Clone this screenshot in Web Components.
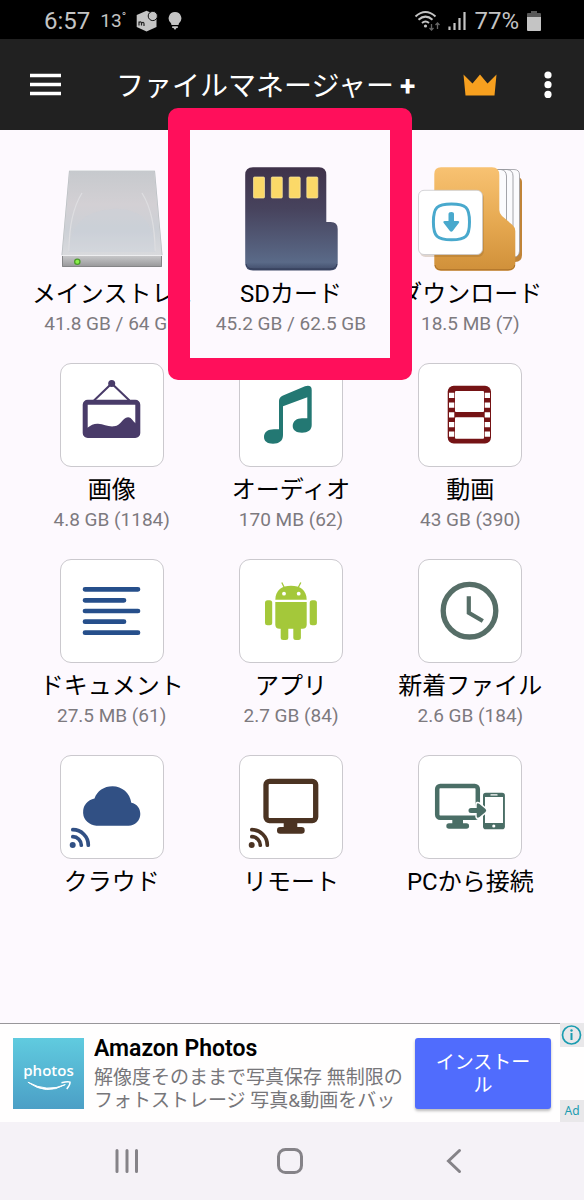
<!DOCTYPE html>
<html lang="ja">
<head>
<meta charset="utf-8">
<meta name="viewport" content="width=device-width, initial-scale=1">
<title>ファイルマネージャー +</title>
<style>
  body { margin: 0; background: #fdf9fe; font-family: Roboto, "Noto Sans CJK JP", sans-serif; color: #000; }
</style>
</head>
<body>
<file-manager-app></file-manager-app>

<template id="t-app">
  <style>
    :host { display: flex; flex-direction: column; min-height: 100vh; }
    main { flex: 1; padding: 37px 24px 24px 22px; display: grid; grid-template-columns: repeat(3, minmax(0, 1fr)); gap: 24px 0; align-content: start; }
    .spot { position: relative; }
    .mark { position: absolute; top: -59px; left: -33px; right: -31px; height: 272px; box-sizing: border-box; border: 22px solid #ff0f5b; border-radius: 10px; pointer-events: none; z-index: 2; }
    svg { display: block; width: 104px; height: 104px; }
  </style>
  <status-bar></status-bar>
  <app-header>ファイルマネージャー</app-header>
  <main>
    <file-tile plain>
      <svg slot="icon" viewBox="0 0 104 104" aria-hidden="true">
        <defs>
          <linearGradient id="dt" x1="0" y1="0" x2="0" y2="1"><stop offset="0" stop-color="#c6c9cd"/><stop offset=".4" stop-color="#d3d0d4"/><stop offset=".7" stop-color="#ccd0d6"/><stop offset="1" stop-color="#d9dadd"/></linearGradient>
          <linearGradient id="df" x1="0" y1="0" x2="0" y2="1"><stop offset="0" stop-color="#c9c9cb"/><stop offset="1" stop-color="#98989a"/></linearGradient>
        </defs>
        <path d="M9.500 3.500H94.500L102 88.500H2Z" fill="url(#dt)" stroke="#e4e6e8"/>
        <path d="M94.500 4 102 88M9.500 4 2 88" stroke="#c0c3c7" fill="none"/>
        <path d="M9 84C9 62 12 42 22 26M95 84C95 62 92 42 82 26" fill="none" stroke="#dedee1" stroke-width="1.200"/>
        <path d="M9 85Q10 45 52 42T95 85Z" fill="#c6cedb" opacity=".25"/>
        <path d="M2 88.500H102V99.700H2Z" fill="url(#df)"/>
        <path d="M2 88.500H102" stroke="#eeeef0"/>
        <path d="M2.500 89V99.500H101.500V89" fill="none" stroke="#858587"/>
        <circle cx="17.300" cy="94.700" r="3.300" fill="#4c9b2c"/><circle cx="17.300" cy="94.700" r="2" fill="#8af04a"/>
      </svg>
      メインストレ…<span slot="size">41.8 GB / 64 GB</span>
    </file-tile>
    <div class="spot">
      <file-tile plain>
        <svg slot="icon" viewBox="0 0 104 104" aria-hidden="true">
          <defs><linearGradient id="sd" x1="0" y1="0" x2="0" y2="1"><stop offset="0" stop-color="#3f324a"/><stop offset=".4" stop-color="#47435d"/><stop offset=".92" stop-color="#5a6a88"/><stop offset="1" stop-color="#3f4a68"/></linearGradient></defs>
          <path d="M14 .3H80Q87.300 .3 87.300 8V55H91.700Q98.700 55 98.700 62V96Q98.700 103.500 91 103.500H14Q6.200 103.500 6.200 96V8Q6.200 .3 14 .3Z" fill="url(#sd)"/>
          <path d="M7 97Q8 102 14 102H91Q97 102 98 97" stroke="#2d3550" fill="none" stroke-width=".8"/>
          <g fill="#fbd968" stroke="#fbe8a0" stroke-width=".7"><rect x="14.500" y="10" width="11" height="21" rx="1"/><rect x="32.300" y="10" width="11" height="21" rx="1"/><rect x="50.200" y="10" width="11" height="21" rx="1"/><rect x="67.800" y="10" width="11" height="21" rx="1"/></g>
        </svg>
        SDカード<span slot="size">45.2 GB / 62.5 GB</span>
      </file-tile>
      <div class="mark"></div>
    </div>
    <file-tile plain>
      <svg slot="icon" viewBox="0 0 104 104" aria-hidden="true">
        <defs><linearGradient id="fo" x1="0" y1="0" x2="0" y2="1"><stop offset="0" stop-color="#f8c272"/><stop offset=".55" stop-color="#e5a850"/><stop offset="1" stop-color="#d0903a"/></linearGradient></defs>
        <path d="M88 10H100Q104 11 104 15V88Q104 95 97 95H86Z" fill="#c08438"/>
        <path d="M70 2.500H96Q101.500 2.500 101.500 8V84Q101 90 96 90H70Z" fill="#fbfbfd" stroke="#999a9f" stroke-width=".8"/>
        <path d="M78 2.500H89Q95 3 95 9V72M78 2.500H83Q88 3 88.500 9V56" fill="none" stroke="#999a9f" stroke-width=".9"/>
        <path d="M23 .2H74Q81.300 .2 81.300 8V43Q81.300 46.500 84 49L94.500 58Q97.300 60.500 97.300 64V97Q97.300 103.700 90 103.700H23Q16.300 103.700 16.300 97V7Q16.300 .2 23 .2Z" fill="url(#fo)"/>
        <path d="M17 98Q18 102.800 23 102.800H90Q96 102.800 96.800 98" fill="none" stroke="#aa7028" stroke-width="1"/>
        <rect x="1.500" y="25" width="64.500" height="65" rx="6" fill="#7c5525" opacity=".22"/>
        <rect x=".5" y="23.300" width="64" height="64.200" rx="5.500" fill="#fff" stroke="#c9c9cd" stroke-width=".8"/>
        <path d="M33.500 37C48 37 51.500 40.500 51.500 54.900S48 72.800 33.500 72.800 15.400 69.300 15.400 54.900 19 37 33.500 37Z" fill="none" stroke="#49a9cd" stroke-width="3"/>
        <path d="M30.500 47Q30.500 45 33.300 45T36 47V54H39.800Q42 54 40.800 56L34.700 64Q33.300 65.500 31.900 64L25.700 56Q24.600 54 26.800 54H30.500Z" fill="#49a9cd"/>
      </svg>
      ダウンロード<span slot="size">18.5 MB (7)</span>
    </file-tile>

    <file-tile>
      <svg slot="icon" viewBox="0 0 104 104" aria-hidden="true">
        <g fill="none" stroke="#493b69"><path d="M34 37.500 51.700 20.500 69.500 37.500" stroke-width="2"/><rect x="25.200" y="39.200" width="52.600" height="33.300" rx="2.500" stroke-width="5"/></g>
        <circle cx="51.700" cy="20.500" r="3.500" fill="#493b69"/>
        <path d="M27 65C31 62 34 60.500 38 60.700 44 61 48 64 54 63.300 62 62.500 62 54.500 68 54.300 72 54.300 73 59.500 77 61V74H27Z" fill="#493b69"/>
      </svg>
      画像<span slot="size">4.8 GB (1184)</span>
    </file-tile>
    <file-tile>
      <svg slot="icon" viewBox="0 0 104 104" aria-hidden="true"><path d="M44 43.300V72C44 78 40 80.700 34 80.700 28 80.700 25 78 25 74 25 69 29 66.300 35 66.300H40V38Q40 34 44 32.500L66 23.300Q72.700 21.500 72.700 27V62C72.700 67 69 69.700 63 69.700 57 69.700 53.700 67 53.700 63 53.700 58 58 55.300 63 55.300H68.300V34.300Z" fill="#237873"/></svg>
      オーディオ<span slot="size">170 MB (62)</span>
    </file-tile>
    <file-tile>
      <svg slot="icon" viewBox="0 0 104 104" aria-hidden="true">
        <rect x="29.700" y="22.700" width="43.300" height="57.700" rx="6" fill="#751315"/>
        <g fill="#fff"><rect x="37" y="28" width="29" height="21" rx="1"/><rect x="37" y="54.300" width="29" height="21.400" rx="1"/>
        <path d="M31 29.700h5.300v5.300h-5.300zM31 39.400h5.300v5.300h-5.300zM31 49.200h5.300v5.300h-5.300zM31 59h5.300v5.300h-5.300zM31 68.500h5.300v5.300h-5.300zM66.700 29.700h5.300v5.300h-5.300zM66.700 39.400h5.300v5.300h-5.300zM66.700 49.200h5.300v5.300h-5.300zM66.700 59h5.300v5.300h-5.300zM66.700 68.500h5.300v5.300h-5.300z"/></g>
      </svg>
      動画<span slot="size">43 GB (390)</span>
    </file-tile>

    <file-tile>
      <svg slot="icon" viewBox="0 0 104 104" aria-hidden="true"><path d="M25 30.300H78M25 41.300H64M25 52H78M25 62.700H64M25 73.700H78" stroke="#264f8b" stroke-width="4.700" stroke-linecap="round"/></svg>
      ドキュメント<span slot="size">27.5 MB (61)</span>
    </file-tile>
    <file-tile>
      <svg slot="icon" viewBox="0 0 104 104" aria-hidden="true">
        <g fill="#a4c83a"><path d="M36.300 40.700C36.500 31 43 26.700 52 26.700S67.500 31 67.700 40.700Z"/><path d="M36.300 43H67.700V65.500Q67.700 69.700 63.500 69.700H40.500Q36.300 69.700 36.300 65.500Z"/><rect x="26" y="41.300" width="7.200" height="25" rx="2.500"/><rect x="70.700" y="41.300" width="7.200" height="25" rx="2.500"/><rect x="41.700" y="64" width="7.600" height="17" rx="2.500"/><rect x="54.300" y="64" width="7.600" height="17" rx="2.500"/></g>
        <path d="M42.800 23.500 45.500 29M61.800 23.500 59 29" stroke="#a4c83a" stroke-width="1.300"/><circle cx="45" cy="34.700" r="1.900" fill="#fff"/><circle cx="59.700" cy="34.700" r="1.900" fill="#fff"/>
      </svg>
      アプリ<span slot="size">2.7 GB (84)</span>
    </file-tile>
    <file-tile>
      <svg slot="icon" viewBox="0 0 104 104" aria-hidden="true"><g fill="none" stroke="#566e67"><circle cx="51.500" cy="51.700" r="26.300" stroke-width="5.300"/><path d="M50.800 37.300V53.700L64.800 62" stroke-width="4.200"/></g></svg>
      新着ファイル<span slot="size">2.6 GB (184)</span>
    </file-tile>

    <file-tile>
      <svg slot="icon" viewBox="0 0 104 104" aria-hidden="true">
        <path d="M36.300 70.700A13.700 13.700 0 0 1 34.500 43.500C37 36 44 31.300 52.500 31.300 62 31.300 70 38 71.300 47.800 77 49 80.300 53.500 80.300 59A11.700 11.700 0 0 1 68.600 70.700Z" fill="#315084"/>
        <circle cx="12.700" cy="90" r="3" fill="#315084"/><path d="M12.800 81.700A8.500 8.500 0 0 1 21.300 90.200M12.800 74.700A15.500 15.500 0 0 1 28.300 90.200" fill="none" stroke="#315084" stroke-width="3.700" stroke-linecap="round"/>
      </svg>
      クラウド
    </file-tile>
    <file-tile>
      <svg slot="icon" viewBox="0 0 104 104" aria-hidden="true">
        <rect x="27" y="26.300" width="49.700" height="39.300" rx="3.500" fill="none" stroke="#4b3322" stroke-width="5.300"/><path d="M44.700 67H58.300V74H44.700Z" fill="#4b3322"/><rect x="38" y="72" width="27.700" height="6.700" rx="3.200" fill="#4b3322"/>
        <circle cx="12.700" cy="90" r="3" fill="#4b3322"/><path d="M12.800 81.700A8.500 8.500 0 0 1 21.300 90.200M12.800 74.700A15.500 15.500 0 0 1 28.300 90.200" fill="none" stroke="#4b3322" stroke-width="3.700" stroke-linecap="round"/>
      </svg>
      リモート
    </file-tile>
    <file-tile>
      <svg slot="icon" viewBox="0 0 104 104" aria-hidden="true">
        <rect x="19.200" y="30.900" width="40.600" height="31.900" rx="3" fill="none" stroke="#4a6e66" stroke-width="4.500"/><path d="M34.300 64H45V69.500H34.300Z" fill="#4a6e66"/><rect x="28.300" y="68.300" width="22.800" height="5.500" rx="2.700" fill="#4a6e66"/>
        <rect x="64" y="36.700" width="24" height="38.500" rx="3" fill="#fff"/><rect x="65" y="37.700" width="21.900" height="36.500" rx="2.800" fill="#4a6e66"/><rect x="67" y="42" width="18" height="26" fill="#fff"/><path d="M73 39.900H79" stroke="#fff" stroke-width="1.300" stroke-linecap="round"/><circle cx="75.800" cy="71" r="1.600" fill="#fff"/>
        <path d="M53 53H58.700V50Q58.700 47 61.500 49L67.500 54Q69 55.500 67.500 57L61.500 62Q58.700 64 58.700 61V58H53Q50.500 58 50.500 55.500T53 53Z" fill="#4a6e66" stroke="#fff" stroke-width="3" paint-order="stroke"/>
      </svg>
      PCから接続
    </file-tile>
  </main>
  <ad-banner>
    Amazon Photos
    <span slot="text">解像度そのままで写真保存 無制限の<br>フォトストレージ 写真&amp;動画をバッ</span>
    <span slot="action">インストール</span>
  </ad-banner>
  <nav-bar></nav-bar>
</template>

<template id="t-status">
  <style>
    :host { display: flex; align-items: center; gap: 10px; height: 39px; box-sizing: border-box; padding: 2px 43px 0 44px; background: #000; color: #c4c4c4; font-size: 24px; line-height: 36px; }
    .temp { font-size: 19px; }
    .temp sup { font-size: 12px; line-height: 0; vertical-align: 6px; }
    svg { display: block; flex: none; }
    .sp { flex: 1; }
    .set { display: flex; align-items: center; gap: 8px; }
  </style>
  <span>6:57</span><span class="temp">13<sup>°</sup></span>
  <svg width="22" height="22" viewBox="0 0 22 22" aria-hidden="true"><path d="M10.500 .8 20.500 5V17L10.500 21.500.700 17V5Z" fill="#c4c4c4"/><circle cx="16.800" cy="6" r="4.600" fill="#c4c4c4" stroke="#111" stroke-width="1"/><path d="M3 15.500V11.500M3 12.500Q5.500 11 5.500 13.500V15.500M5.500 13Q8 11.500 8 14V16" fill="none" stroke="#222" stroke-width="1.200"/></svg>
  <svg width="14" height="20" viewBox="4 1 14 20" aria-hidden="true"><path d="M11 2A6.300 6.300 0 0 0 7 13.200L7.500 15H14.500L15 13.200A6.300 6.300 0 0 0 11 2ZM8.200 16.300H13.800V18H12.500L11 20 9.500 18H8.200Z" fill="#c4c4c4"/></svg>
  <span class="sp"></span>
  <div class="set">
    <svg width="26" height="22" viewBox="0 0 26 22" aria-hidden="true"><g fill="none" stroke="#c4c4c4" stroke-width="2"><path d="M1.500 6.500Q11.500-2.500 21.500 6.500M4.500 9.700Q11.500 3.500 18.500 9.700M8 13Q11.500 10 15 13"/></g><circle cx="11.500" cy="16" r="1.600" fill="#c4c4c4"/><path d="M17.500 14V20M15.500 18 17.500 20 19.500 18M23.500 19V13M21.500 15 23.500 13 25.500 15" stroke="#666" fill="none" stroke-width="1.300"/></svg>
    <svg width="18" height="20" viewBox="0 0 18 20" aria-hidden="true"><path d="M1.500 15.500V19M6.500 12V19M11.500 7V19M16.500 1V19" stroke="#c4c4c4" stroke-width="2.200"/></svg>
    <span>77%</span>
    <svg width="14" height="20" viewBox="0 0 14 20" aria-hidden="true"><path d="M4 0H10V2H13Q14 2 14 3V6H0V3Q0 2 1 2H4Z" fill="#585858"/><path d="M0 6H14V19Q14 20 13 20H1Q0 20 0 19Z" fill="#c4c4c4"/></svg>
  </div>
</template>

<template id="t-header">
  <style>
    :host { display: flex; align-items: center; height: 91px; box-sizing: border-box; padding: 0 12px 0 22px; background: #212121; color: #fff; }
    button { flex: none; width: 48px; height: 48px; padding: 0; border: 0; background: none; color: inherit; display: grid; place-items: center; }
    h1 { flex: 1; min-width: 0; margin: 4px 0 0 46px; display: flex; align-items: center; gap: 6px; font-size: 28px; line-height: 40px; font-weight: 400; white-space: nowrap; }
    b { font-size: 28px; line-height: 36px; font-weight: 700; }
    .acts { display: flex; gap: 20px; }
  </style>
  <button aria-label="メニュー"><svg width="32" height="24" viewBox="0 0 32 24"><path d="M0 2.500H31M0 11.500H31M0 20.500H31" stroke="#fff" stroke-width="3.300"/></svg></button>
  <h1><slot></slot><b>+</b></h1>
  <div class="acts">
    <button aria-label="プレミアム"><svg width="34" height="24" viewBox="0 0 34 24"><path d="M.5 1.500 9.500 10.500 17 1.500 24.500 10.500 33.500 1.500 31.500 22.500H2.500Z" fill="#f7a01f"/></svg></button>
    <button aria-label="その他"><svg width="8" height="28" viewBox="0 0 8 28"><g fill="#fff"><circle cx="4" cy="4" r="3.600"/><circle cx="4" cy="13.700" r="3.600"/><circle cx="4" cy="23.400" r="3.600"/></g></svg></button>
  </div>
</template>

<template id="t-tile">
  <style>
    :host { display: block; }
    button { display: flex; flex-direction: column; align-items: center; width: 100%; padding: 0; border: 0; background: none; font: inherit; color: inherit; }
    .tile { box-sizing: border-box; width: 104px; height: 104px; border: 1px solid #cbc9ce; border-radius: 11px; background: #fff; display: grid; place-content: center; }
    :host([plain]) .tile { border-color: transparent; background: none; }
    .name { margin-top: 8px; font-size: 24px; line-height: 30px; white-space: nowrap; }
    .size { font-size: 19px; line-height: 30px; color: #7d7a7f; white-space: nowrap; }
  </style>
  <button><span class="tile"><slot name="icon"></slot></span><span class="name"><slot></slot></span><span class="size"><slot name="size"></slot></span></button>
</template>

<template id="t-ad">
  <style>
    :host { display: flex; height: 99px; background: #fffefe; }
    .body { flex: 1; min-width: 0; display: flex; align-items: flex-start; box-sizing: border-box; border-top: 1px solid #98969a; padding: 14px 9px 0 13px; }
    .logo { flex: none; width: 71px; height: 71px; background: linear-gradient(#60cbdf, #4b9fc6); display: flex; flex-direction: column; align-items: center; color: #fff; font: 600 15px/21px "Open Sans", sans-serif; padding-top: 22px; box-sizing: border-box; }
    .copy { flex: 1; min-width: 0; margin-left: 10px; overflow: hidden; white-space: nowrap; }
    h2 { margin: 0 0 6px; font-size: 23px; line-height: 22px; font-weight: 600; color: #000; }
    p { margin: 0; font-size: 19px; line-height: 23px; color: #77767a; }
    .cta { flex: none; width: 136px; height: 71px; padding: 0 20px; border: 0; border-radius: 3px; background: #506cfd; box-shadow: 0 2px 3px #0004; color: #fff; font: inherit; font-size: 19px; line-height: 23px; }
    .side { flex: none; width: 24px; display: flex; flex-direction: column; justify-content: space-between; font: 12px/22px "Noto Sans", sans-serif; text-align: center; }
    .side a { display: block; background: #e9e8ea; color: #1a9cb0; text-decoration: none; }
    svg { display: block; }
  </style>
  <div class="body">
    <div class="logo">photos<svg width="46" height="12" viewBox="0 0 48 12" aria-hidden="true"><path d="M2 1Q22 12 41 3.500 21 15 2 1Z" fill="#fff" stroke="#fff"/><path d="M37 1.500Q44 0 46 1 46 4 42.500 8" fill="none" stroke="#fff" stroke-width="1.500"/></svg></div>
    <div class="copy"><h2><slot></slot></h2><p><slot name="text"></slot></p></div>
    <button class="cta"><slot name="action"></slot></button>
  </div>
  <div class="side">
    <a href="#info" aria-label="広告について"><svg width="24" height="24" viewBox="0 0 24 24"><circle cx="11.500" cy="12" r="9" fill="none" stroke="#1a9cb0" stroke-width="1.700"/><path d="M11.500 10V17" stroke="#1a9cb0" stroke-width="2"/><circle cx="11.500" cy="7.500" r="1.200" fill="#1a9cb0"/></svg></a>
    <a href="#ad">Ad</a>
  </div>
</template>

<template id="t-nav">
  <style>
    :host { display: grid; grid-template-columns: repeat(3, 1fr); height: 78px; box-sizing: border-box; padding: 0 48px 0 45px; background: #f5f2f7; }
    button { padding: 0; border: 0; background: none; display: grid; place-items: center; }
    svg { fill: none; stroke: #858388; stroke-width: 3; }
  </style>
  <button aria-label="履歴"><svg width="24" height="26" viewBox="0 0 24 26"><path d="M2 2.500V23.500M12 2.500V23.500M21.500 2.500V23.500" stroke-linecap="round"/></svg></button>
  <button aria-label="ホーム"><svg width="28" height="28" viewBox="0 0 28 28"><rect x="2.500" y="2.500" width="23" height="23" rx="7"/></svg></button>
  <button aria-label="戻る"><svg width="16" height="26" viewBox="0 0 16 26"><path d="M13.500 2.500 2.500 13 13.500 23.500" stroke-linecap="round"/></svg></button>
</template>

<script>
  const define = (name, templateId) => {
    customElements.define(name, class extends HTMLElement {
      constructor() {
        super();
        this.attachShadow({ mode: "open" }).append(document.getElementById(templateId).content.cloneNode(true));
      }
    });
  };
  define("status-bar", "t-status");
  define("app-header", "t-header");
  define("file-tile", "t-tile");
  define("ad-banner", "t-ad");
  define("nav-bar", "t-nav");
  define("file-manager-app", "t-app");
</script>
</body>
</html>
